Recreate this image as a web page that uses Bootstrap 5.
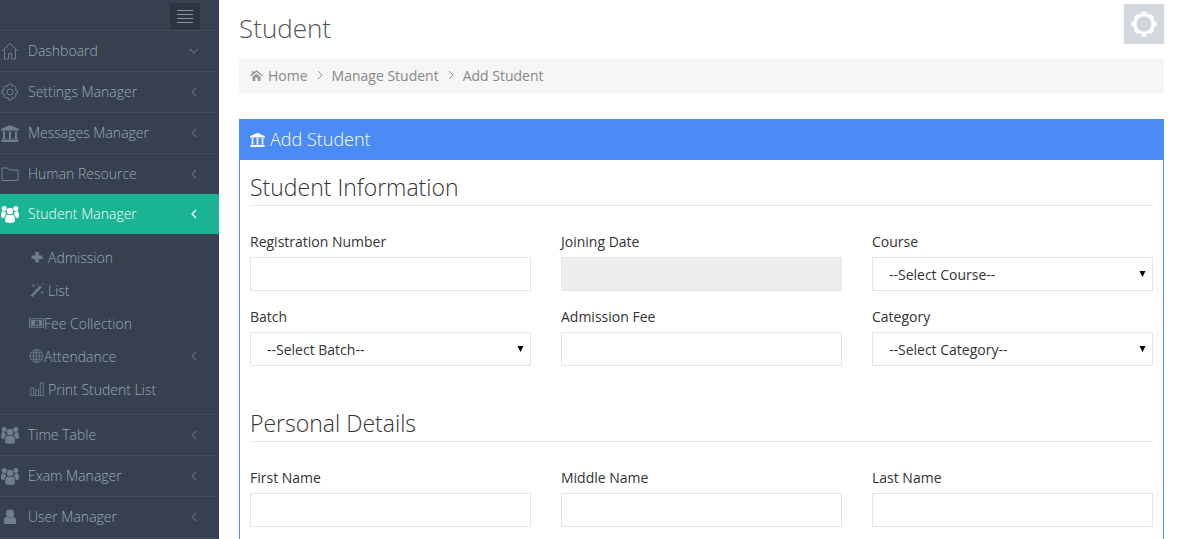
<!DOCTYPE html>
<html lang="en">
<head>
  <meta charset="UTF-8" />
  <meta name="viewport" content="width=device-width, initial-scale=1.0" />
  <title>Add Student</title>
  <link rel="stylesheet" href="https://cdn.jsdelivr.net/npm/bootstrap@5.3.3/dist/css/bootstrap.min.css">
  <style>
    html, body { height: 100vh; overflow: hidden; }
    body { font-family: "Open Sans", "Liberation Sans", sans-serif; font-size: 14px; color: #333; }

    .sidebar { width: 219px; flex: none; background: #36404e; height: 100vh; overflow: hidden; font-weight: 300; }
    .toggle-row { height: 31px; padding: 3px 19px 0 0; border-bottom: 1px solid #414b59; }
    .toggle-btn { width: 30px; height: 27px; background: #2c3542; padding: 7px; display: flex; flex-direction: column; justify-content: space-between; margin-left: auto; }
    .toggle-btn span { display: block; height: 1px; background: #8b95a3; }
    .side-item { height: 41px; color: #9ba8ba; border-bottom: 1px solid #414b59; padding: 0 0 1px 1px; font-size: 14px; }
    .side-item .ico { width: 18px; height: 18px; margin-right: 9px; flex: none; color: #717d8e; }
    .chev { width: 6px; height: 10px; margin-left: auto; margin-right: 22px; flex: none; color: #5f6b7c; }
    .chev.down { width: 10px; margin-right: 20px; }
    .side-item.active { background: #1ab394; color: #fff; border: 0; height: 40px; }
    .side-item.active .ico, .side-item.active .chev { color: #fff; }
    .side-item.no-line { border: 0; height: 40px; }
    .sub-menu { padding: 7px 0 8px; border-bottom: 1px solid #414b59; }
    .sub-item { height: 33px; color: #9ba8ba; padding-left: 30px; font-size: 14px; padding-bottom: 1px; }
    .sub-item .ico { width: 14px; height: 14px; flex: none; color: #717d8e; margin-right: 4px; }
    .sub-item .ico.tight { margin: 0 0 0 -1px; width: 15px; }

    .main { padding: 3px 14px 0 20px; }
    .page-title { font-size: 26px; font-weight: 300; color: #555; margin: 0; line-height: 50px; }
    .gear-box { width: 40px; height: 40px; background: #d3d8dd; margin-top: 1px; }
    .crumbs { background: #f6f6f6; height: 36px; margin: 5px 0 25px; padding: 0 11px 2px; color: #888; }
    .crumbs .home { width: 13px; height: 11px; margin-right: 5px; color: #999; }
    .crumbs .sep { width: 6px; height: 10px; margin: 0 9px; color: #999; }
    .panel-box { border: 1px solid #4a8bf6; border-bottom: 0; }
    .panel-head { background: #4a8bf6; color: #fff; height: 40px; font-size: 18px; font-weight: 300; padding: 0 10px 2px; }
    .panel-head svg { width: 15px; height: 15px; margin-right: 5px; fill: #fff; }
    .panel-body { padding: 10px 10px 0; }
    .sect-title { font-size: 23px; font-weight: 300; color: #333; border-bottom: 1px solid #e9e9e9; margin: 0 0 26px; line-height: 35px; height: 36px; }
    .sect-title.second { margin-top: 24px; }
    .form-row { --bs-gutter-x: 30px; }
    .field { margin-bottom: 16px; }
    .field label { display: block; line-height: 20px; margin-bottom: 5px; color: #333; }
    .field .form-control, .field .form-select { height: 34px; border: 1px solid #e5e6e7; border-radius: 0; font-size: 14px; color: #333; padding: 4px 16px; }
    .field .form-control:disabled { background: #eee; }
    .field .form-select { background-image: url("data:image/svg+xml,%3Csvg xmlns='http://www.w3.org/2000/svg' width='7' height='6'%3E%3Cpath d='M.5 0h6L3.500 6z'/%3E%3C/svg%3E"); background-size: 7px 6px; background-position: right 6px center; }
  </style>
</head>
<body>
  <svg width="0" height="0" class="position-absolute">
    <symbol id="i-home" viewBox="0 0 18 18"><path d="M1 9 9 1.500 17 9M3.500 7.500V17h4v-5.500h3V17h4V7.500" fill="none" stroke="currentColor"/></symbol>
    <symbol id="i-gear" viewBox="0 0 18 18"><circle cx="9" cy="9" r="3" fill="none" stroke="currentColor"/><path d="M7.500 1h3l.5 2.500 2-.8 2.200 2.200-1 2 2.300.6v3l-2.300.6 1 2-2.200 2.200-2-1-.5 2.700h-3l-.5-2.700-2 1-2.200-2.200 1-2L1 10.500v-3l2.300-.6-1-2 2.200-2.200 2 .8z" fill="none" stroke="currentColor"/></symbol>
    <symbol id="i-bank" viewBox="0 0 18 18"><path d="M9 1 18 5v1.500H0V5zM1.500 7.500h3v.8h-.5v5.700h.5v1h-3v-1H2V8.300h-.5zM7.500 7.500h3v.8H10v5.700h.5v1h-3v-1H8V8.300h-.5zM13.500 7.500h3v.8H16v5.700h.5v1h-3v-1h.5V8.300h-.5zM.5 15.500h17V18H.5z" fill="currentColor"/></symbol>
    <symbol id="i-folder" viewBox="0 0 18 18"><path d="M1 3h5.500l1.500 2h9v10.500H1z" fill="none" stroke="currentColor"/></symbol>
    <symbol id="i-users" viewBox="0 0 18 18"><circle cx="9" cy="6" r="3.200" fill="currentColor"/><circle cx="3.200" cy="3.600" r="2.500" fill="currentColor"/><circle cx="14.800" cy="3.600" r="2.500" fill="currentColor"/><path d="M4.300 17c-.6-5.500 1-7.300 2.700-7.600 1.300.9 2.700.9 4 0 1.700.3 3.300 2.100 2.700 7.600-2.500 1.200-6.900 1.200-9.400 0zM0 11c0-3.500 1-5 2-5 1 .7 1.700.8 2.400.6-.1 1.300.3 2.100 1 2.800-1.300.6-2 2-2.200 3.800C1.500 12.900 0 12.500 0 11zM18 11c0-3.500-1-5-2-5-1 .7-1.700.8-2.400.6.100 1.300-.3 2.100-1 2.800 1.300.6 2 2 2.200 3.800 1.700-.3 3.200-.7 3.200-2.200z" fill="currentColor"/></symbol>
    <symbol id="i-user" viewBox="0 0 18 18"><circle cx="9" cy="5.500" r="4" fill="currentColor"/><path d="M3 16c-.8-5 1-7 3.200-7.200 1.800 1.300 3.800 1.300 5.600 0C14 9 15.800 11 15 16z" fill="currentColor"/></symbol>
    <symbol id="i-plus" viewBox="0 0 14 14"><path d="M5.200 2h3.600v3.500H12.500v3.400H8.800v3.600H5.200V8.900H1.500V5.500h3.700z" fill="currentColor"/></symbol>
    <symbol id="i-wand" viewBox="0 0 14 14"><path d="M.5 12.500 10 2.500l1.800 1.700-9.500 10z" fill="currentColor"/><path d="M3.500 1v3M2 2.500h3M12 8v3M10.500 9.500h3M7.500.5v2M12.500.5v1.500" stroke="currentColor" stroke-width=".7" fill="none"/></symbol>
    <symbol id="i-money" viewBox="0 0 16 14"><rect x=".5" y="2.500" width="15" height="9" fill="none" stroke="currentColor"/><rect x="2" y="4" width="12" height="6" fill="currentColor"/><circle cx="8.500" cy="7" r="2.500" fill="#36404e"/><path d="M8.300 5.500h.8v3h-.8z" fill="currentColor"/></symbol>
    <symbol id="i-globe" viewBox="0 0 14 14"><g fill="none" stroke="currentColor" stroke-width=".8"><circle cx="7" cy="7" r="6.500"/><ellipse cx="7" cy="7" rx="3" ry="6.500"/><path d="M7 .5v13M.5 7h13M1.500 3.800h11M1.500 10.200h11"/></g></symbol>
    <symbol id="i-bars" viewBox="0 0 14 14"><g fill="none" stroke="currentColor" stroke-width=".9"><rect x=".8" y="6" width="3" height="7.500"/><rect x="5.500" y="8" width="3" height="5.500"/><rect x="10.200" y=".8" width="3" height="12.700"/></g></symbol>
    <symbol id="i-left" viewBox="0 0 6 10"><path d="M5 1 1 5l4 4" fill="none" stroke="currentColor" stroke-width="1.200"/></symbol>
    <symbol id="i-down" viewBox="0 0 10 6"><path d="M1 1l4 4 4-4" fill="none" stroke="currentColor" stroke-width="1.200"/></symbol>
    <symbol id="i-right" viewBox="0 0 6 10"><path d="M1 1l4 4-4 4" fill="none" stroke="currentColor"/></symbol>
    <symbol id="i-house" viewBox="0 0 14 12"><path d="M7 0 14 6l-1 1.200L7 2.200 1 7.200 0 6l2-1.700V1h2v1.600z" fill="currentColor"/><path d="M2.500 7.500 7 3.700l4.500 3.800V12H8.300V8.500H5.700V12H2.500z" fill="currentColor"/></symbol>
    <symbol id="i-cog" viewBox="0 0 26 26"><circle cx="13" cy="13" r="9.200" fill="none" stroke="#fff" stroke-width="3"/><g fill="#fff"><rect x="10.500" y="0.500" width="5" height="4"/><rect x="10.500" y="21.500" width="5" height="4"/><rect x="0.500" y="10.500" width="4" height="5"/><rect x="21.500" y="10.500" width="4" height="5"/><rect x="10.500" y="1" width="5" height="3.500" transform="rotate(45 13 13)"/><rect x="10.500" y="1" width="5" height="3.500" transform="rotate(135 13 13)"/><rect x="10.500" y="1" width="5" height="3.500" transform="rotate(225 13 13)"/><rect x="10.500" y="1" width="5" height="3.500" transform="rotate(315 13 13)"/></g></symbol>
  </svg>

  <div class="d-flex">
    <aside class="sidebar">
      <div class="toggle-row"><div class="toggle-btn"><span></span><span></span><span></span><span></span></div></div>
      <div class="side-item d-flex align-items-center"><svg class="ico"><use href="#i-home"/></svg>Dashboard<svg class="chev down"><use href="#i-down"/></svg></div>
      <div class="side-item d-flex align-items-center"><svg class="ico"><use href="#i-gear"/></svg>Settings Manager<svg class="chev"><use href="#i-left"/></svg></div>
      <div class="side-item d-flex align-items-center"><svg class="ico"><use href="#i-bank"/></svg>Messages Manager<svg class="chev"><use href="#i-left"/></svg></div>
      <div class="side-item no-line d-flex align-items-center"><svg class="ico"><use href="#i-folder"/></svg>Human Resource<svg class="chev"><use href="#i-left"/></svg></div>
      <div class="side-item active d-flex align-items-center"><svg class="ico"><use href="#i-users"/></svg>Student Manager<svg class="chev"><use href="#i-left"/></svg></div>
      <div class="sub-menu">
        <div class="sub-item d-flex align-items-center"><svg class="ico"><use href="#i-plus"/></svg>Admission</div>
        <div class="sub-item d-flex align-items-center"><svg class="ico"><use href="#i-wand"/></svg>List</div>
        <div class="sub-item d-flex align-items-center"><svg class="ico tight"><use href="#i-money"/></svg>Fee Collection</div>
        <div class="sub-item d-flex align-items-center"><svg class="ico tight"><use href="#i-globe"/></svg>Attendance<svg class="chev"><use href="#i-left"/></svg></div>
        <div class="sub-item d-flex align-items-center"><svg class="ico"><use href="#i-bars"/></svg>Print Student List</div>
      </div>
      <div class="side-item d-flex align-items-center"><svg class="ico"><use href="#i-users"/></svg>Time Table<svg class="chev"><use href="#i-left"/></svg></div>
      <div class="side-item d-flex align-items-center"><svg class="ico"><use href="#i-users"/></svg>Exam Manager<svg class="chev"><use href="#i-left"/></svg></div>
      <div class="side-item d-flex align-items-center"><svg class="ico"><use href="#i-user"/></svg>User Manager<svg class="chev"><use href="#i-left"/></svg></div>
    </aside>

    <main class="main flex-grow-1">
      <div class="d-flex justify-content-between">
        <h2 class="page-title">Student</h2>
        <div class="gear-box d-flex align-items-center justify-content-center"><svg width="26" height="26"><use href="#i-cog"/></svg></div>
      </div>
      <div class="crumbs d-flex align-items-center">
        <svg class="home"><use href="#i-house"/></svg>
        <span>Home</span><svg class="sep"><use href="#i-right"/></svg>
        <span>Manage Student</span><svg class="sep"><use href="#i-right"/></svg>
        <span>Add Student</span>
      </div>
      <div class="panel-box">
        <div class="panel-head d-flex align-items-center"><svg><use href="#i-bank"/></svg>Add Student</div>
        <div class="panel-body">
          <h3 class="sect-title">Student Information</h3>
          <div class="row form-row">
            <div class="col-4 field"><label>Registration Number</label><input type="text" class="form-control"></div>
            <div class="col-4 field"><label>Joining Date</label><input type="text" class="form-control" disabled></div>
            <div class="col-4 field"><label>Course</label><select class="form-select"><option>--Select Course--</option></select></div>
            <div class="col-4 field"><label>Batch</label><select class="form-select"><option>--Select Batch--</option></select></div>
            <div class="col-4 field"><label>Admission Fee</label><input type="text" class="form-control"></div>
            <div class="col-4 field"><label>Category</label><select class="form-select"><option>--Select Category--</option></select></div>
          </div>
          <h3 class="sect-title second">Personal Details</h3>
          <div class="row form-row">
            <div class="col-4 field"><label>First Name</label><input type="text" class="form-control"></div>
            <div class="col-4 field"><label>Middle Name</label><input type="text" class="form-control"></div>
            <div class="col-4 field"><label>Last Name</label><input type="text" class="form-control"></div>
          </div>
        </div>
      </div>
    </main>
  </div>
</body>
</html>
